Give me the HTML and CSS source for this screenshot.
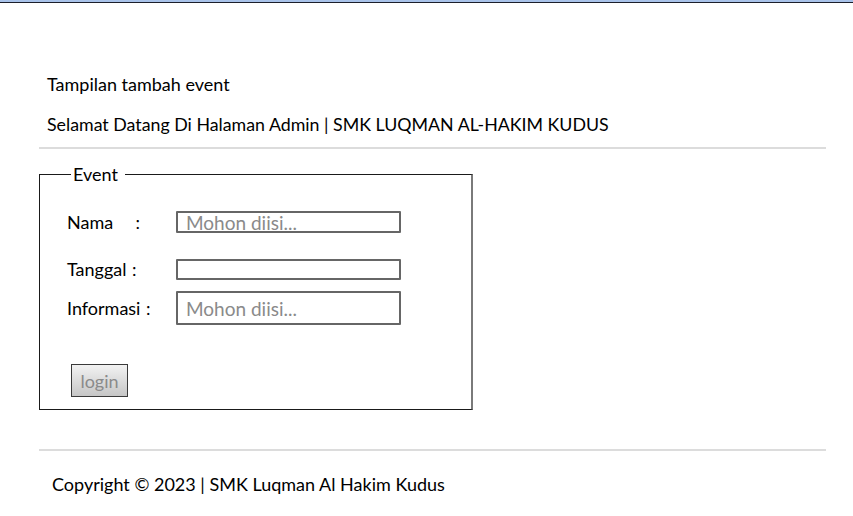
FILE: index.html
```html
<!DOCTYPE html>
<html lang="id">
<head>
<meta charset="utf-8">
<title>Tambah Event</title>
<link rel="stylesheet" href="styles.css">
</head>
<body>
<div class="topbar"></div>
<header class="header">
  <p class="title">Tampilan tambah event</p>
  <p class="welcome">Selamat Datang Di Halaman Admin | SMK LUQMAN AL-HAKIM KUDUS</p>
</header>
<hr class="divider">
<form class="form">
  <fieldset class="box">
    <legend class="legend">Event</legend>
    <div class="row row-nama">
      <label class="label" for="nama">Nama&nbsp;&nbsp;&nbsp;&nbsp;:</label>
      <input class="field field-nama" id="nama" type="text" placeholder="Mohon diisi...">
    </div>
    <div class="row row-tanggal">
      <label class="label" for="tanggal">Tanggal :</label>
      <input class="field field-tanggal" id="tanggal" type="text">
    </div>
    <div class="row row-info">
      <label class="label" for="info">Informasi :</label>
      <input class="field field-info" id="info" type="text" placeholder="Mohon diisi...">
    </div>
    <button class="btn" type="button">login</button>
  </fieldset>
</form>
<hr class="divider divider-foot">
<footer class="footer">Copyright © 2023 | SMK Luqman Al Hakim Kudus</footer>
</body>
</html>
```

FILE: styles.css
```css
html, body {
  margin: 0;
  padding: 0;
  background: #fff;
}
body {
  font-family: Lato, "Open Sans", "Liberation Sans", sans-serif;
  color: #000;
  font-size: 18px;
}
.topbar {
  height: 2px;
  background: #a9c3ea;
  border-bottom: 1px solid #1c1f2b;
}
.header {
  padding: 69px 0 0 47px;
}
.title, .welcome {
  margin: 0;
  line-height: 24px;
  font-size: 18px;
}
.welcome {
  margin-top: 16px;
  font-size: 17.8px;
}
.divider {
  margin: 11px 27px 0 39px;
  border: 0;
  height: 2px;
  background: #dcdcdc;
}
.form {
  margin: 15px 0 0 39px;
  width: 434px;
}
.box {
  margin: 0;
  padding: 0 0 12px 0;
  border: 1px solid #1a1a1a;
  border-right: 2px solid #7a7a7a;
  min-width: 0;
}
.legend {
  margin-left: 31px;
  padding: 0 7px 0 2px;
  line-height: 20px;
  font-size: 18px;
}
.row {
  display: grid;
  grid-template-columns: 109px 225px;
  align-items: center;
  padding-left: 27px;
}
.row-nama { margin-top: 27px; }
.row-tanggal { margin-top: 25px; }
.row-info { margin-top: 11px; }
.label {
  font-size: 18px;
  word-spacing: 1px;
}
.field {
  box-sizing: border-box;
  width: 225px;
  margin: 0;
  border: 2px solid #666;
  border-radius: 1px;
  padding: 0 0 0 8px;
  font-family: inherit;
  font-size: 19px;
  color: #333;
  background: #fff;
  outline: none;
}
.field::placeholder {
  color: #8a8a8a;
}
.field-nama { height: 22px; }
.field-tanggal { height: 21px; }
.field-info { height: 34px; }
.btn {
  display: block;
  margin: 39px 0 0 31px;
  width: 57px;
  height: 33px;
  padding: 0;
  border: 1px solid #3a3a3a;
  border-radius: 0;
  background: linear-gradient(#f2f2f2, #c6c6c6);
  color: #8a8a8a;
  font-family: inherit;
  font-size: 18px;
}
.divider-foot {
  margin-top: 39px;
}
.footer {
  padding: 21px 0 0 52px;
  line-height: 24px;
  font-size: 18px;
}
```
